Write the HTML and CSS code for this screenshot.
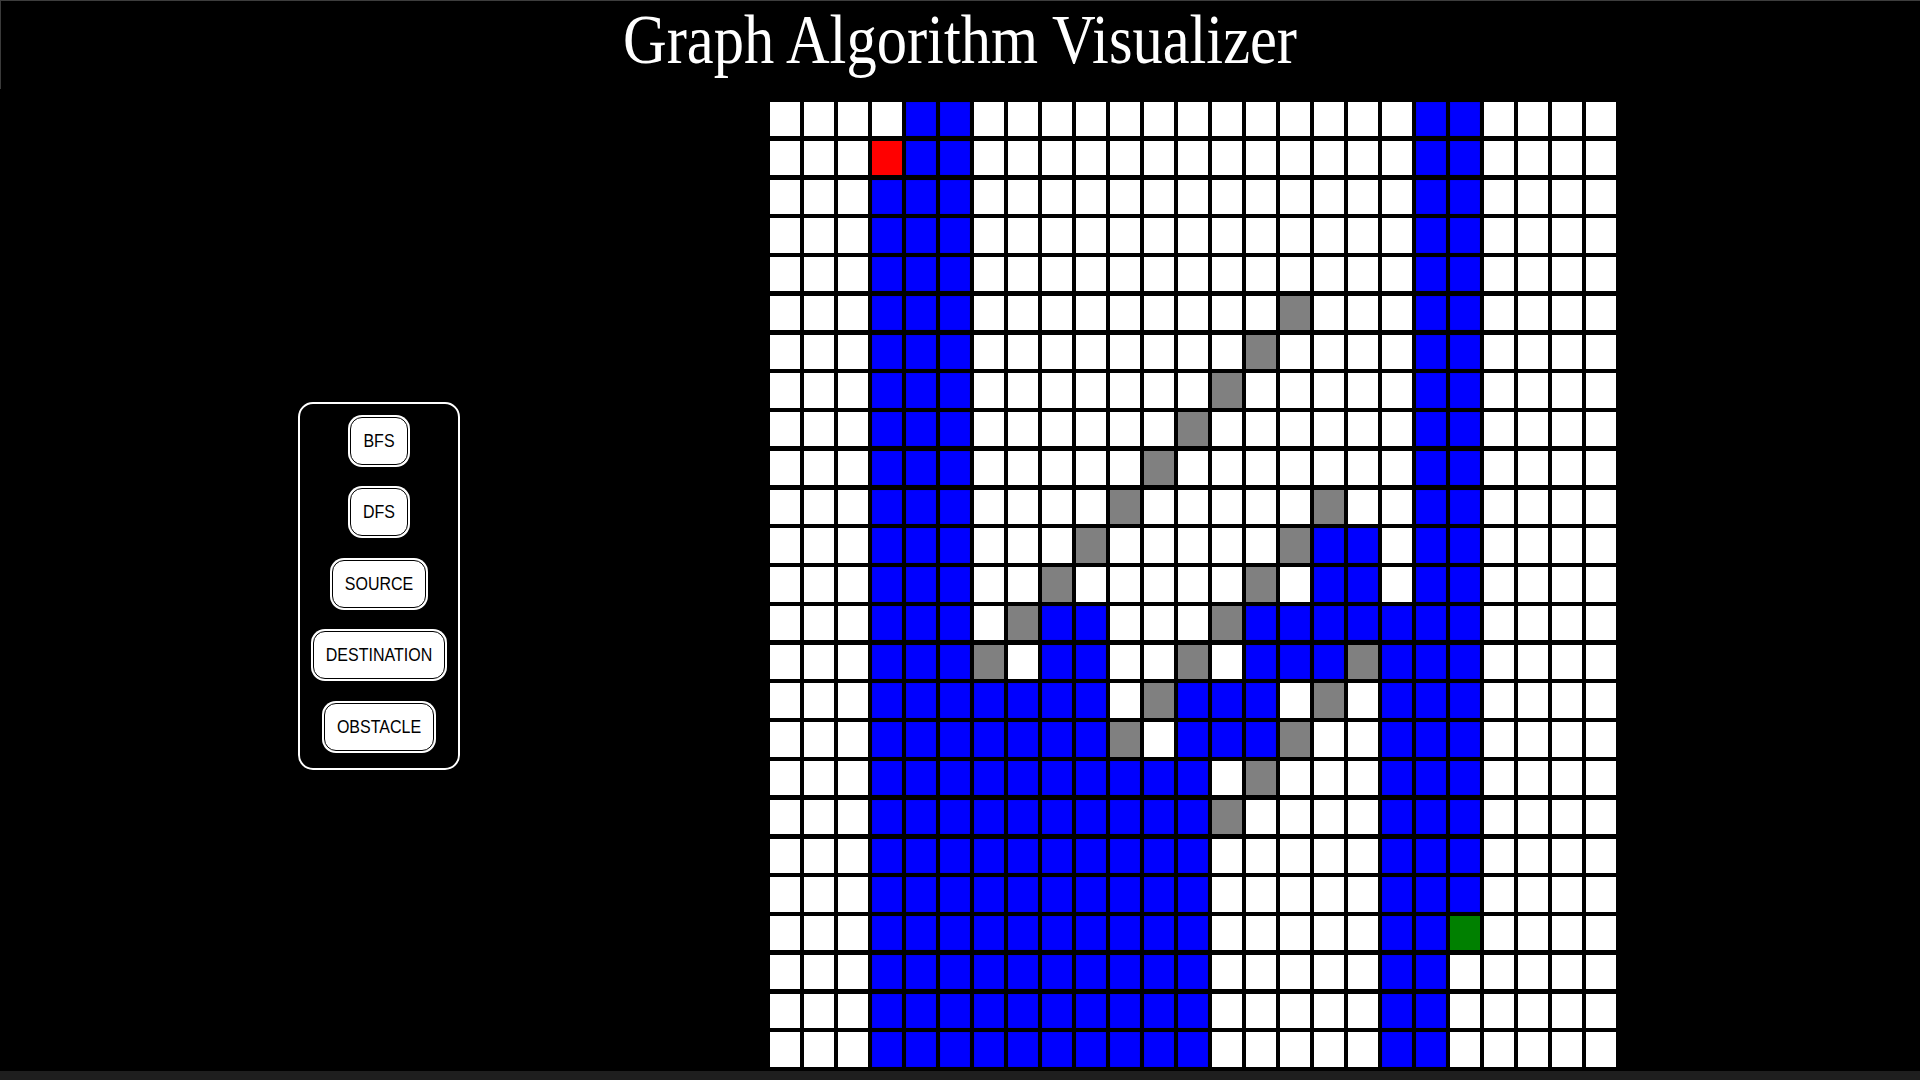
FILE: index.html
```html
<!DOCTYPE html>
<html lang="en">
<head>
<meta charset="utf-8">
<title>Graph Algorithm Visualizer</title>
<link rel="stylesheet" href="styles.css">
</head>
<body>
<div class="page">
  <header class="header">
    <h1 class="title">Graph Algorithm Visualizer</h1>
  </header>
  <main class="main">
    <aside class="panel">
      <button class="btn"><span class="btn-label">BFS</span></button>
      <button class="btn"><span class="btn-label">DFS</span></button>
      <button class="btn"><span class="btn-label">SOURCE</span></button>
      <button class="btn"><span class="btn-label">DESTINATION</span></button>
      <button class="btn"><span class="btn-label">OBSTACLE</span></button>
    </aside>
    <div class="grid" id="grid"></div>
  </main>
  <div class="hscroll"></div>
</div>
<script src="script.js"></script>
</body>
</html>
```
FILE: styles.css
```css
html, body {
  margin: 0;
  height: 100%;
  background: #000;
  overflow: hidden;
}

.page {
  position: relative;
  height: 1080px;
  box-sizing: border-box;
  border-top: 1px solid #3d3d3d;
  display: flex;
  flex-direction: column;
}

.page::before {
  content: "";
  position: absolute;
  left: 0;
  top: 0;
  width: 1px;
  height: 88px;
  background: #3a3a3a;
}

.header {
  height: 101px;
  display: flex;
  justify-content: center;
}

.title {
  margin: 1px 0 0;
  font-family: "Liberation Serif", "Times New Roman", serif;
  font-weight: normal;
  font-size: 60.5px;
  line-height: 66px;
  color: #fff;
  transform: scaleY(1.145);
  transform-origin: top center;
}

.main {
  display: flex;
  align-items: center;
  padding-left: 298px;
  gap: 310px;
}

.panel {
  width: 162px;
  box-sizing: border-box;
  border: 2px solid #fff;
  border-radius: 15px;
  padding: 13px 0 17px;
  margin-top: 3px;
  display: flex;
  flex-direction: column;
  align-items: center;
  gap: 23.5px;
}

.btn {
  height: 48px;
  padding: 0 12px;
  border: 1px solid #000;
  border-radius: 12px;
  background: #fff;
  box-shadow: 0 0 0 2px #fff;
  font-family: "Liberation Sans", Arial, sans-serif;
  font-size: 16px;
  color: #000;
}

.btn-label {
  display: inline-block;
  transform: scaleY(1.12);
}

.grid {
  display: grid;
  grid-template-columns: repeat(25, 30px);
  grid-auto-rows: 34.33px;
  column-gap: 4px;
  row-gap: 4.45px;
}

.cell {
  background: #fff;
}

.cell.visited {
  background: #0000ff;
  box-shadow: inset 0 0 1px #000070;
}

.cell.wall {
  background: #808080;
}

.cell.source {
  background: #ff0000;
}

.cell.dest {
  background: #008000;
}

.hscroll {
  margin-top: auto;
  height: 9px;
  background: #1e1e1e;
}
```
FILE: script.js
```js
(function () {
  var rows = [
    "4w 2b 13w 2b 4w",
    "3w 1r 2b 13w 2b 4w",
    "3w 3b 13w 2b 4w",
    "3w 3b 13w 2b 4w",
    "3w 3b 13w 2b 4w",
    "3w 3b 9w 1g 3w 2b 4w",
    "3w 3b 8w 1g 4w 2b 4w",
    "3w 3b 7w 1g 5w 2b 4w",
    "3w 3b 6w 1g 6w 2b 4w",
    "3w 3b 5w 1g 7w 2b 4w",
    "3w 3b 4w 1g 5w 1g 2w 2b 4w",
    "3w 3b 3w 1g 5w 1g 2b 1w 2b 4w",
    "3w 3b 2w 1g 5w 1g 1w 2b 1w 2b 4w",
    "3w 3b 1w 1g 2b 3w 1g 7b 4w",
    "3w 3b 1g 1w 2b 2w 1g 1w 3b 1g 3b 4w",
    "3w 7b 1w 1g 3b 1w 1g 1w 3b 4w",
    "3w 7b 1g 1w 3b 1g 2w 3b 4w",
    "3w 10b 1w 1g 3w 3b 4w",
    "3w 10b 1g 4w 3b 4w",
    "3w 10b 5w 3b 4w",
    "3w 10b 5w 3b 4w",
    "3w 10b 5w 2b 1e 4w",
    "3w 10b 5w 2b 5w",
    "3w 10b 5w 2b 5w",
    "3w 10b 5w 2b 5w"
  ];
  var kinds = { w: "cell", b: "cell visited", g: "cell wall", r: "cell source", e: "cell dest" };
  var grid = document.getElementById("grid");
  rows.forEach(function (row) {
    row.split(" ").forEach(function (run) {
      var n = parseInt(run, 10);
      var k = run.charAt(run.length - 1);
      for (var i = 0; i < n; i++) {
        var d = document.createElement("div");
        d.className = kinds[k];
        grid.appendChild(d);
      }
    });
  });
})();
```
